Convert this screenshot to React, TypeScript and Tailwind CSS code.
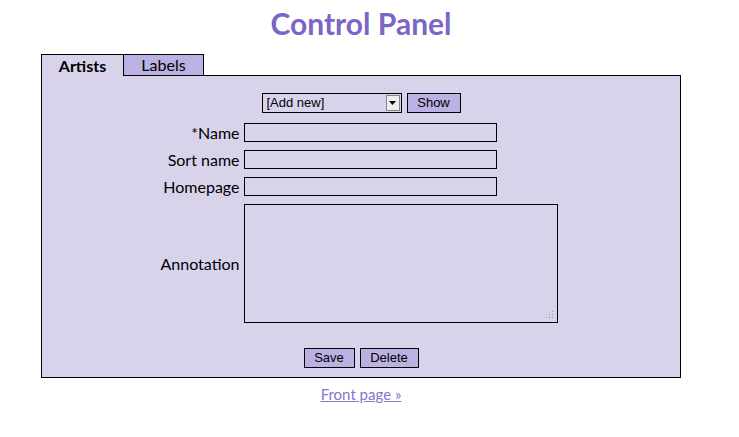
import React from "react";

const fields = ["*Name", "Sort name", "Homepage"];

export default function App() {
  return (
    <div className="w-[739px] h-[437px] bg-white overflow-hidden" style={{ fontFamily: "Lato, 'DejaVu Sans', sans-serif" }}>
      <div className="w-[722px]">
        <h1 className="text-center text-[30px] font-bold text-[#7b66c6] leading-[34px] pt-[6px] h-[54px]">Control Panel</h1>
        <div className="w-[640px] mx-auto">
          <div className="flex relative z-10 -mb-px">
            <div className="w-[83px] h-[22px] border border-black border-b-0 bg-[#d8d3eb] text-[16px] font-bold text-black flex items-center justify-center">Artists</div>
            <div className="w-[80px] h-[22px] border-t border-r border-b border-black bg-[#bcb1e3] text-[16px] text-black flex items-center justify-center">Labels</div>
          </div>
          <div className="border border-black bg-[#d8d3eb] h-[303px] pt-[17px]">
            <div className="flex justify-center gap-[5px]" style={{ fontFamily: "'Liberation Sans', Arial, sans-serif" }}>
              <div className="w-[140px] h-[20px] border border-black bg-[#d8d3eb] flex items-center text-[13px] text-black pl-[4px] relative">
                [Add new]
                <div className="absolute right-[1px] top-[1px] w-[14px] h-[16px] bg-[#eeeeee] border border-[#888] flex items-center justify-center">
                  <svg width="7" height="4" viewBox="0 0 7 4"><path d="M0 0h7L3.5 4z" fill="#000" /></svg>
                </div>
              </div>
              <div className="w-[54px] h-[20px] border border-black bg-[#bcb1e3] text-[13px] text-black flex items-center justify-center">Show</div>
            </div>
            <div className="mt-[10px] w-fit mx-auto pr-[4px] grid grid-cols-[auto_auto] gap-x-[4px] gap-y-[8px] items-center">
              {fields.map((f) => (
                <React.Fragment key={f}>
                  <div className="text-right text-[16px] text-black leading-[19px]">{f}</div>
                  <div className="w-[253px] h-[19px] border border-black bg-[#d8d3eb]" />
                </React.Fragment>
              ))}
              <div className="text-right text-[16px] text-black">Annotation</div>
              <div className="w-[314px] h-[119px] border border-black bg-[#d8d3eb] relative">
                <svg className="absolute right-[3px] bottom-[3px]" width="9" height="9" viewBox="0 0 9 9">
                  <g fill="#9a96a8">
                    <rect x="7" y="1" width="1" height="1" />
                    <rect x="4" y="4" width="1" height="1" />
                    <rect x="7" y="4" width="1" height="1" />
                    <rect x="1" y="7" width="1" height="1" />
                    <rect x="4" y="7" width="1" height="1" />
                    <rect x="7" y="7" width="1" height="1" />
                  </g>
                </svg>
              </div>
            </div>
            <div className="flex justify-center gap-[5px] mt-[25px]" style={{ fontFamily: "'Liberation Sans', Arial, sans-serif" }}>
              <div className="w-[51px] h-[20px] border border-black bg-[#bcb1e3] text-[13px] text-black flex items-center justify-center">Save</div>
              <div className="w-[59px] h-[20px] border border-black bg-[#bcb1e3] text-[13px] text-black flex items-center justify-center">Delete</div>
            </div>
          </div>
          <div className="text-center mt-[4px]">
            <a href="#" className="text-[15px] text-[#8a75cf] underline">Front page »</a>
          </div>
        </div>
      </div>
    </div>
  );
}
